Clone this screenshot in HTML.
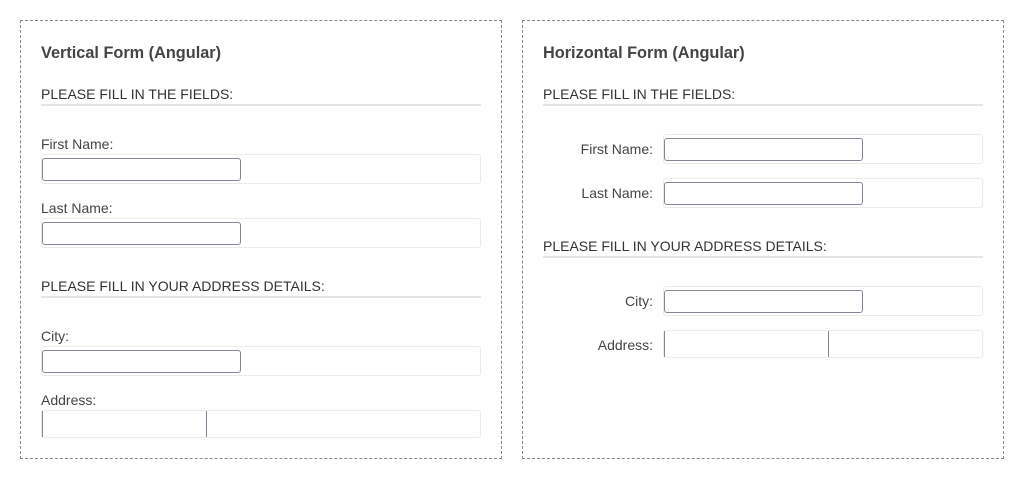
<!DOCTYPE html>
<html><head><meta charset="utf-8"><style>
body{margin:0;width:1024px;height:479px;background:#fff;font-family:"Liberation Sans",sans-serif;position:relative;overflow:hidden}
.p{position:absolute;border:1px dashed #888;box-sizing:border-box}
.a{position:absolute;white-space:nowrap}
.t{font-size:16.3px;font-weight:bold;color:#444;line-height:20px}
.h{font-size:14px;color:#333;line-height:16px}
.l{font-size:14px;color:#444;line-height:16px}
.hr{position:absolute;height:2px;background:#e6e6e6}
.w{position:absolute;border:1px solid #ebebeb;border-radius:3px;box-sizing:border-box}
.i{position:absolute;border:1px solid #8a8498;border-radius:3px;box-sizing:border-box;background:#fff}
.v{position:absolute;width:1px;background:#8a8498}
</style></head><body>
<div class="p" style="left:20px;top:20px;width:482px;height:439px"></div>
<div class="p" style="left:522px;top:20px;width:482px;height:439px"></div>

<div class="a t" style="left:41px;top:43px">Vertical Form (Angular)</div>
<div class="a h" style="left:41px;top:86px">PLEASE FILL IN THE FIELDS:</div>
<div class="hr" style="left:41px;top:104px;width:440px"></div>
<div class="a l" style="left:41px;top:136px">First Name:</div>
<div class="w" style="left:41px;top:154px;width:440px;height:30px"></div>
<div class="i" style="left:42px;top:158px;width:199px;height:23px"></div>
<div class="a l" style="left:41px;top:200px">Last Name:</div>
<div class="w" style="left:41px;top:218px;width:440px;height:30px"></div>
<div class="i" style="left:42px;top:222px;width:199px;height:23px"></div>
<div class="a h" style="left:41px;top:278px">PLEASE FILL IN YOUR ADDRESS DETAILS:</div>
<div class="hr" style="left:41px;top:296px;width:440px"></div>
<div class="a l" style="left:41px;top:328px">City:</div>
<div class="w" style="left:41px;top:346px;width:440px;height:30px"></div>
<div class="i" style="left:42px;top:350px;width:199px;height:23px"></div>
<div class="a l" style="left:41px;top:392px">Address:</div>
<div class="w" style="left:41px;top:410px;width:440px;height:28px"></div>
<div class="v" style="left:42px;top:411px;height:26px"></div>
<div class="v" style="left:206px;top:411px;height:26px"></div>

<div class="a t" style="left:543px;top:43px">Horizontal Form (Angular)</div>
<div class="a h" style="left:543px;top:86px">PLEASE FILL IN THE FIELDS:</div>
<div class="hr" style="left:543px;top:104px;width:440px"></div>
<div class="a l" style="right:371px;top:141px">First Name:</div>
<div class="w" style="left:663px;top:134px;width:320px;height:30px"></div>
<div class="i" style="left:664px;top:138px;width:199px;height:23px"></div>
<div class="a l" style="right:371px;top:185px">Last Name:</div>
<div class="w" style="left:663px;top:178px;width:320px;height:30px"></div>
<div class="i" style="left:664px;top:182px;width:199px;height:23px"></div>
<div class="a h" style="left:543px;top:238px">PLEASE FILL IN YOUR ADDRESS DETAILS:</div>
<div class="hr" style="left:543px;top:256px;width:440px"></div>
<div class="a l" style="right:371px;top:293px">City:</div>
<div class="w" style="left:663px;top:286px;width:320px;height:30px"></div>
<div class="i" style="left:664px;top:290px;width:199px;height:23px"></div>
<div class="a l" style="right:371px;top:337px">Address:</div>
<div class="w" style="left:663px;top:330px;width:320px;height:28px"></div>
<div class="v" style="left:664px;top:331px;height:26px"></div>
<div class="v" style="left:828px;top:331px;height:26px"></div>
</body></html>
